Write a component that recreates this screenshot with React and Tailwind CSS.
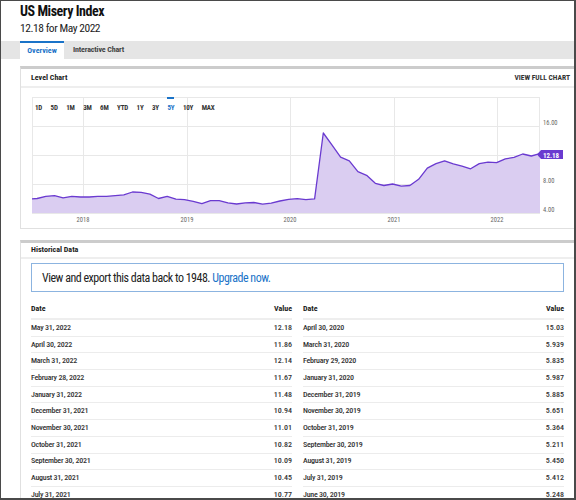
import React from 'react'

const series = [
  5.9, 6.0, 6.3, 6.4, 6.1, 6.3, 6.2,
  6.2, 6.3, 6.3, 6.4, 6.5, 6.9, 6.85, 6.6, 6.0, 6.3, 5.9, 5.85,
  5.6, 5.3, 5.7, 5.7, 5.4, 5.248, 5.412, 5.45, 5.211, 5.364, 5.651, 5.885,
  5.987, 5.835, 5.939, 15.03, 13.4, 11.7, 11.2, 9.7, 9.2, 8.1, 7.8, 8.0,
  7.7, 7.8, 8.65, 10.2, 10.8, 11.2, 10.77, 10.45, 10.09, 10.82, 11.01, 10.94,
  11.48, 11.67, 12.14, 11.86, 12.18,
]

const left = [
  ['May 31, 2022', '12.18'],
  ['April 30, 2022', '11.86'],
  ['March 31, 2022', '12.14'],
  ['February 28, 2022', '11.67'],
  ['January 31, 2022', '11.48'],
  ['December 31, 2021', '10.94'],
  ['November 30, 2021', '11.01'],
  ['October 31, 2021', '10.82'],
  ['September 30, 2021', '10.09'],
  ['August 31, 2021', '10.45'],
  ['July 31, 2021', '10.77'],
]

const right = [
  ['April 30, 2020', '15.03'],
  ['March 31, 2020', '5.939'],
  ['February 29, 2020', '5.835'],
  ['January 31, 2020', '5.987'],
  ['December 31, 2019', '5.885'],
  ['November 30, 2019', '5.651'],
  ['October 31, 2019', '5.364'],
  ['September 30, 2019', '5.211'],
  ['August 31, 2019', '5.450'],
  ['July 31, 2019', '5.412'],
  ['June 30, 2019', '5.248'],
]

const ranges = ['1D', '5D', '1M', '3M', '6M', 'YTD', '1Y', '3Y', '5Y', '10Y', 'MAX']

function Chart() {
  const W = 508
  const H = 116
  const n = series.length
  const px = i => W - (n - 1 - i) * 8.67
  const py = v => H - (v - 4) * 7.25
  const pts = series.map((v, i) => `${px(i).toFixed(1)},${py(v).toFixed(1)}`)
  const line = 'M' + pts.join(' L')
  const area = line + ` L${W},${H} L${px(0).toFixed(1)},${H} Z`
  const years = [['2018', 51], ['2019', 155], ['2020', 258], ['2021', 362], ['2022', 465]]

  return (
    <div className="relative w-[540px] h-[126px]">
      <svg width="540" height="126" className="block">
        <defs>
          <clipPath id="plot">
            <rect x="0" y="0" width={W} height={H} />
          </clipPath>
        </defs>
        <rect x="0.5" y="0.5" width={W - 1} height={H} fill="#fff" stroke="#e8e8e8" />
        {[29, 58, 87].map(y => (
          <line key={y} x1="0" x2={W} y1={y + 0.5} y2={y + 0.5} stroke="#e8e8e8" />
        ))}
        {years.map(([, x]) => (
          <line key={x} x1={x + 0.5} x2={x + 0.5} y1="0" y2={H} stroke="#e8e8e8" />
        ))}
        <g clipPath="url(#plot)">
          <path d={area} fill="#dacdf1" />
          <path d={line} fill="none" stroke="#6a3ad0" strokeWidth="1.3" strokeLinejoin="round" />
        </g>
        {years.map(([t, x]) => (
          <text key={t} x={x} y="125" textAnchor="middle" fontSize="6.5" fill="#666">{t}</text>
        ))}
        <text x="511" y="28" fontSize="6.5" fill="#666">16.00</text>
        <text x="511" y="86" fontSize="6.5" fill="#666">8.00</text>
        <text x="511" y="115" fontSize="6.5" fill="#666">4.00</text>
        <path d="M505,57.5 L509,53 L531,53 L531,62 L509,62 Z" fill="#6a3ad0" />
        <text x="519" y="60.5" textAnchor="middle" fontSize="7" fontWeight="700" fill="#fff">12.18</text>
      </svg>
      <div className="absolute left-[3px] top-0 flex gap-[8.5px] text-[7px] font-bold text-[#333] tracking-[-0.2px]">
        {ranges.map(r => (
          <div
            key={r}
            className={
              r === '5Y'
                ? 'h-[18px] pt-[4px] border-t-2 border-[#1a73c8] text-[#1a73c8]'
                : 'h-[18px] pt-[6px]'
            }
          >
            {r}
          </div>
        ))}
      </div>
    </div>
  )
}

function Column({ rows }) {
  return (
    <div>
      <div className="h-[20px] flex items-center justify-between border-b-2 border-[#eee] text-[8px] font-bold text-[#222]">
        <span>Date</span>
        <span>Value</span>
      </div>
      {rows.map(([d, v]) => (
        <div key={d} className="h-[16.7px] flex items-center justify-between border-b border-[#ececec] text-[8px] font-medium text-[#333]">
          <span className="tracking-[-0.25px]">{d}</span>
          <span>{v}</span>
        </div>
      ))}
    </div>
  )
}

export default function App() {
  return (
    <div className="w-[576px] h-[500px] overflow-hidden bg-white border-l border-t border-r-2 border-b-2 border-[#4a4a4a] font-['Roboto',sans-serif] [font-stretch:75%] text-[#222]">
      <div className="pl-[19px] pt-[2px]">
        <h1 className="text-[14px] leading-[17px] font-bold text-[#111] tracking-[-0.45px]">US Misery Index</h1>
        <div className="text-[11.5px] leading-[15px] mt-[1px] text-[#222] tracking-[-0.45px]">12.18 for May 2022</div>
      </div>

      <div className="mt-[5px] h-[18px] bg-[#e5e5e5] pl-[19px] flex">
        <div className="w-[44px] bg-white border-t-2 border-[#1a73c8] flex items-center justify-center text-[8px] font-bold text-[#1a73c8]">
          Overview
        </div>
        <div className="ml-[9px] flex items-center text-[8px] font-bold text-[#444] tracking-[-0.15px]">Interactive Chart</div>
      </div>

      <div className="ml-[19px] mt-[7px] w-[556px] border-l border-b border-[#e0e0e0] border-t-[3px] border-t-[#cccccc]">
        <div className="h-[19px] flex items-center justify-between pl-[10px] pr-[6px] border-b-2 border-[#eee]">
          <span className="text-[8px] font-bold text-[#222]">Level Chart</span>
          <span className="text-[7.5px] font-bold text-[#333]">VIEW FULL CHART</span>
        </div>
        <div className="pl-[11px] pt-[9px] pb-[5px]">
          <Chart />
        </div>
      </div>

      <div className="ml-[19px] mt-[11px] w-[556px] border-l border-[#e0e0e0] border-t-[3px] border-t-[#cccccc] pl-[10px] pr-[12px]">
        <div className="h-[16px] flex items-center border-b-2 border-[#eee] -ml-[10px] pl-[10px] -mr-[12px]">
          <span className="text-[8px] font-bold text-[#222]">Historical Data</span>
        </div>
        <div className="mt-[4px] h-[29px] border border-[#8cb4e0] flex items-center pl-[10px] text-[12px] text-[#222] tracking-[-0.5px]">
          <span>View and export this data back to 1948.&nbsp;</span>
          <span className="text-[#1a73c8]">Upgrade now.</span>
        </div>
        <div className="mt-[8px] grid grid-cols-2 gap-x-[11px]">
          <Column rows={left} />
          <Column rows={right} />
        </div>
      </div>
    </div>
  )
}
